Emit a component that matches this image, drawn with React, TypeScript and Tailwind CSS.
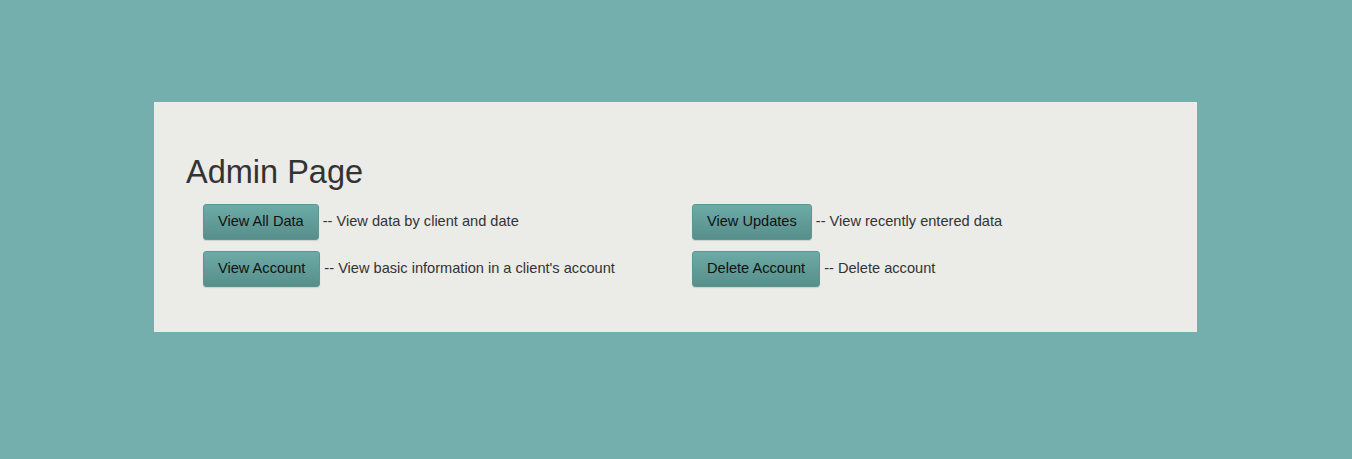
const actions = [
  [
    { label: "View All Data", note: "-- View data by client and date" },
    { label: "View Account", note: "-- View basic information in a client's account" },
  ],
  [
    { label: "View Updates", note: "-- View recently entered data" },
    { label: "Delete Account", note: "-- Delete account" },
  ],
];

const App = () => {
  return (
    <div className="min-h-[459px] bg-[#74afad] pt-[102px] font-['Liberation_Sans',Arial,sans-serif]">
      <div className="ml-[154px] w-[1043px] h-[230px] bg-[#ebebe8] px-[32px] pt-[53px]">
        <h1 className="text-[32.5px] leading-[1.1] text-[#333333]">Admin Page</h1>
        <div className="grid grid-cols-[489px_1fr] mt-[13px]">
          {actions.map((col, i) => (
            <div key={i} className="pl-[17px] flex flex-col gap-[11px]">
              {col.map((a) => (
                <div key={a.label} className="flex items-center">
                  <button className="h-[36px] px-[14px] rounded-[3px] border border-[#5d9591] bg-gradient-to-b from-[#6caba7] to-[#578e8a] text-[14.6px] text-[#111] shadow-[0_1px_1px_rgba(0,0,0,0.12)]">
                    {a.label}
                  </button>
                  <span className="ml-[4px] text-[14.6px] text-[#333333]">{a.note}</span>
                </div>
              ))}
            </div>
          ))}
        </div>
      </div>
    </div>
  );
};

export default App;
